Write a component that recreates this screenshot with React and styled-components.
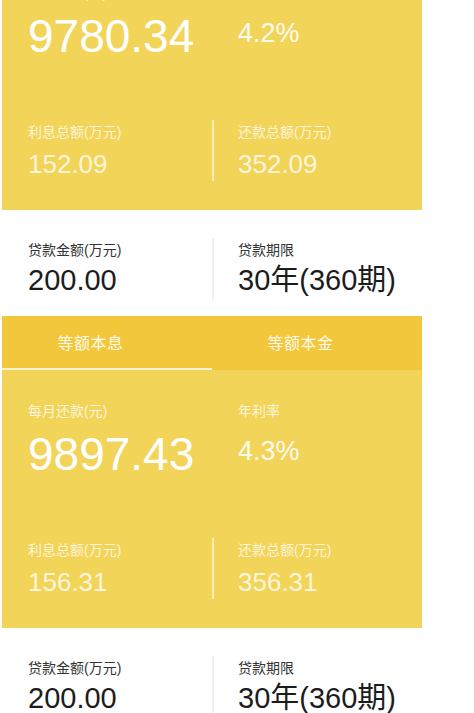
import React from 'react';
import styled, { createGlobalStyle } from 'styled-components';

const GlobalStyle = createGlobalStyle`
  html, body {
    margin: 0;
    padding: 0;
    background: #ffffff;
    overflow: hidden;
  }
  body {
    font-family: "Liberation Sans", "Noto Sans CJK SC", sans-serif;
  }
`;

// the view is scrolled: the first result card starts 48px above the top
const Page = styled.div`
  width: 420px;
  margin: -48px 0 0 2px;
  display: flex;
  flex-direction: column;
`;

const Block = styled.section`
  display: flex;
  flex-direction: column;
`;

const TabBar = styled.div`
  display: grid;
  grid-template-columns: 1fr 1fr;
  height: 54px;
  background: #f3c73b;
`;

const Tab = styled.div`
  display: flex;
  align-items: center;
  justify-content: center;
  padding-right: 33px;
  box-sizing: border-box;
  font-size: 16px;
  color: rgba(255, 255, 255, 0.92);
  letter-spacing: 0.5px;
  border-bottom: 2px solid ${(p) => (p.$active ? '#fdf3d0' : 'transparent')};
`;

const Result = styled.div`
  background: #f2d459;
  padding: 31px 0 29px;
  display: flex;
  flex-direction: column;
`;

const Row = styled.div`
  display: grid;
  grid-template-columns: 1fr 1fr;
  margin-top: ${(p) => p.$gap || 0}px;
  min-height: ${(p) => p.$height || 0}px;
`;

const Cell = styled.div`
  display: flex;
  flex-direction: column;
  align-items: flex-start;
  padding-left: 24px;
  border-left: 2px solid ${(p) => p.$divider || 'transparent'};
`;

const Label = styled.div`
  font-size: 14px;
  line-height: 20px;
  margin-top: ${(p) => p.$top || 0}px;
  color: ${(p) => (p.$dark ? '#333333' : 'rgba(255, 255, 255, 0.78)')};
`;

const Value = styled.div`
  font-size: ${(p) => p.$size}px;
  line-height: 1;
  margin-top: ${(p) => p.$top}px;
  color: ${(p) => p.$color};
  white-space: nowrap;
`;

const Info = styled.div`
  background: #ffffff;
  padding: 28px 0 16px;
`;

function Calculator({ tab, monthly, rate, interest, total, amount, term }) {
  return (
    <Block>
      {tab !== undefined && (
        <TabBar>
          <Tab $active={tab === 0}>等额本息</Tab>
          <Tab $active={tab === 1}>等额本金</Tab>
        </TabBar>
      )}
      <Result>
        <Row>
          <Cell>
            <Label>每月还款(元)</Label>
            <Value $size={46} $top={10} $color="#ffffff">{monthly}</Value>
          </Cell>
          <Cell>
            <Label>年利率</Label>
            <Value $size={27} $top={17} $color="rgba(255,255,255,0.92)">{rate}</Value>
          </Cell>
        </Row>
        <Row $gap={61} $height={61}>
          <Cell>
            <Label $top={2}>利息总额(万元)</Label>
            <Value $size={26} $top={9} $color="rgba(255,255,255,0.8)">{interest}</Value>
          </Cell>
          <Cell $divider="rgba(255,255,255,0.6)">
            <Label $top={2}>还款总额(万元)</Label>
            <Value $size={26} $top={9} $color="rgba(255,255,255,0.8)">{total}</Value>
          </Cell>
        </Row>
      </Result>
      <Info>
        <Row $height={62}>
          <Cell>
            <Label $dark $top={2}>贷款金额(万元)</Label>
            <Value $size={29} $top={6} $color="#1c1c1c">{amount}</Value>
          </Cell>
          <Cell $divider="#f0f0f0">
            <Label $dark $top={2}>贷款期限</Label>
            <Value $size={29} $top={6} $color="#1c1c1c">{term}</Value>
          </Cell>
        </Row>
      </Info>
    </Block>
  );
}

function App() {
  return (
    <>
      <GlobalStyle />
      <Page>
        <Calculator
          monthly="9780.34"
          rate="4.2%"
          interest="152.09"
          total="352.09"
          amount="200.00"
          term="30年(360期)"
        />
        <Calculator
          tab={0}
          monthly="9897.43"
          rate="4.3%"
          interest="156.31"
          total="356.31"
          amount="200.00"
          term="30年(360期)"
        />
      </Page>
    </>
  );
}

export default App;
